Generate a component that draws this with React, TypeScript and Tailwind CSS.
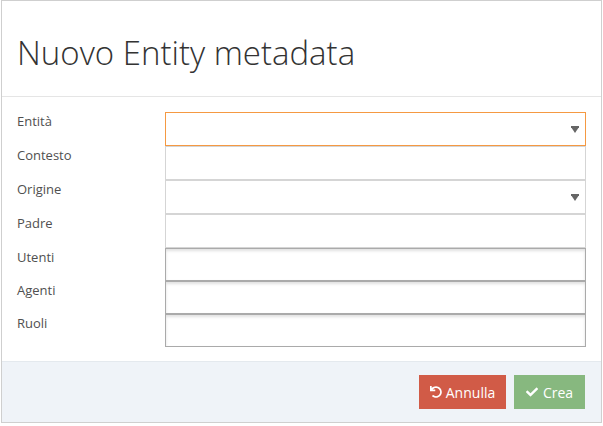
import React from 'react';
import { FaUndo, FaCheck } from 'react-icons/fa';

type Field = {
  label: string;
  kind: 'select' | 'text' | 'tags';
  focused?: boolean;
  h: string;
};

const fields: Field[] = [
  { label: 'Entità', kind: 'select', focused: true, h: 'h-[34px]' },
  { label: 'Contesto', kind: 'text', h: 'h-[34px]' },
  { label: 'Origine', kind: 'select', h: 'h-[34px]' },
  { label: 'Padre', kind: 'text', h: 'h-[34px]' },
  { label: 'Utenti', kind: 'tags', h: 'h-[33px]' },
  { label: 'Agenti', kind: 'tags', h: 'h-[33px]' },
  { label: 'Ruoli', kind: 'tags', h: 'h-[33px]' },
];

const Caret = () => (
  <svg width="8" height="7" viewBox="0 0 8 7" className="shrink-0">
    <rect x="0" y="0" width="8" height="2" fill="#666" />
    <polygon points="0,1 8,1 4,7" fill="#666" />
  </svg>
);

const FieldRow: React.FC<{ field: Field }> = ({ field }) => {
  // bordo arancione quando il campo ha il focus (tema ace)
  let box = 'border border-[#d5d5d5]';
  if (field.focused) box = 'border border-[#f59942]';
  if (field.kind === 'tags') box = 'border border-[#aaa] shadow-[inset_0_2px_3px_rgba(0,0,0,0.12)]';

  return (
    <div className={`flex ${field.h}`}>
      <label className="w-[148px] shrink-0 text-[13px] leading-[18px] text-[#505050]">{field.label}</label>
      <div className={`flex-1 bg-white flex items-center justify-end pr-[6px] ${box}`}>
        {field.kind === 'select' && <Caret />}
      </div>
    </div>
  );
};

export default function App() {
  return (
    <div className="w-[603px] h-[426px] bg-white font-['Open_Sans',sans-serif]">
      <div className="ml-px w-[601px] h-[423px] border border-[#cfcfcf] flex flex-col">
        {/* Header */}
        <div className="h-[96px] border-b border-[#e5e5e5] px-[15px] pt-[34px] shrink-0">
          <h3 className="text-[33px] leading-[36px] font-light text-[#333]">Nuovo Entity metadata</h3>
        </div>

        {/* Body */}
        <div className="pt-[15px] pl-[15px] pr-[15px] flex flex-col">
          {fields.map((f) => (
            <FieldRow key={f.label} field={f} />
          ))}
        </div>

        {/* Footer */}
        <div className="mt-auto h-[61px] bg-[#eff3f8] border-t border-[#e4e9ee] flex items-center justify-end gap-[8px] pr-[16px]">
          <button className="h-[34px] w-[87px] bg-[#d15b47] text-white text-[14px] flex items-center justify-center gap-[4px]">
            <FaUndo className="w-[12px] h-[12px]" />
            Annulla
          </button>
          <button className="h-[34px] w-[71px] bg-[#87b87f] text-white text-[14px] flex items-center justify-center gap-[5px]">
            <FaCheck className="w-[12px] h-[12px]" />
            Crea
          </button>
        </div>
      </div>
    </div>
  );
}
